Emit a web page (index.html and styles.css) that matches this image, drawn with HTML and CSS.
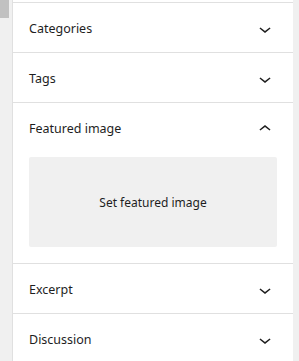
FILE: index.html
```html
<!DOCTYPE html>
<html lang="en">
<head>
  <meta charset="UTF-8">
  <title>Document settings</title>
  <link rel="stylesheet" href="styles.css">
</head>
<body>

  <div class="scroll-track">
    <div class="scroll-thumb"></div>
  </div>

  <div class="sidebar">
    <div class="panel">
      <button class="panel-title">Categories
        <svg class="chevron" viewBox="0 0 24 24" width="24" height="24"><path d="M17.5 11.6L12 16l-5.5-4.4.9-1.2L12 14l4.6-3.6 1 1.2z"/></svg>
      </button>
    </div>

    <div class="panel">
      <button class="panel-title">Tags
        <svg class="chevron" viewBox="0 0 24 24" width="24" height="24"><path d="M17.5 11.6L12 16l-5.5-4.4.9-1.2L12 14l4.6-3.6 1 1.2z"/></svg>
      </button>
    </div>

    <div class="panel open">
      <button class="panel-title">Featured image
        <svg class="chevron" viewBox="0 0 24 24" width="24" height="24"><path d="M6.5 12.4L12 8l5.5 4.4-.9 1.2L12 10l-4.6 3.6-1-1.2z"/></svg>
      </button>
      <div class="panel-body">
        <button class="image-toggle">Set featured image</button>
      </div>
    </div>

    <div class="panel">
      <button class="panel-title">Excerpt
        <svg class="chevron" viewBox="0 0 24 24" width="24" height="24"><path d="M17.5 11.6L12 16l-5.5-4.4.9-1.2L12 14l4.6-3.6 1 1.2z"/></svg>
      </button>
    </div>

    <div class="panel">
      <button class="panel-title">Discussion
        <svg class="chevron" viewBox="0 0 24 24" width="24" height="24"><path d="M17.5 11.6L12 16l-5.5-4.4.9-1.2L12 14l4.6-3.6 1 1.2z"/></svg>
      </button>
    </div>
  </div>

</body>
</html>
```

FILE: styles.css
```css
body {
  margin: 0;
  background: #f0f0f0;
  font-family: 'Noto Sans', 'Open Sans', sans-serif;
  font-size: 12px;
  color: #1e1e1e;
  display: flex;
  height: 361px;
  overflow: hidden;
}

.scroll-track {
  width: 12px;
  flex-shrink: 0;
}

.scroll-thumb {
  width: 9px;
  height: 18px;
  background: #c1c1c1;
}

.sidebar {
  width: 280px;
  flex-shrink: 0;
  background: #fff;
  border-left: 1px solid #e0e0e0;
  padding-top: 2px;
}

.panel {
  border-top: 1px solid #e0e0e0;
}

.panel-title {
  display: flex;
  align-items: center;
  justify-content: space-between;
  width: 100%;
  height: 49px;
  padding: 2px 16px 0;
  border: none;
  background: none;
  font: inherit;
  font-size: 12.5px;
  color: inherit;
  text-align: left;
  cursor: pointer;
  box-sizing: border-box;
}

.chevron {
  fill: #1e1e1e;
}

.panel-body {
  padding: 5px 16px 16px;
}

.image-toggle {
  display: flex;
  align-items: center;
  justify-content: center;
  width: 100%;
  height: 90px;
  border: none;
  border-radius: 2px;
  background: #f0f0f0;
  font: inherit;
  color: inherit;
  cursor: pointer;
}
```
